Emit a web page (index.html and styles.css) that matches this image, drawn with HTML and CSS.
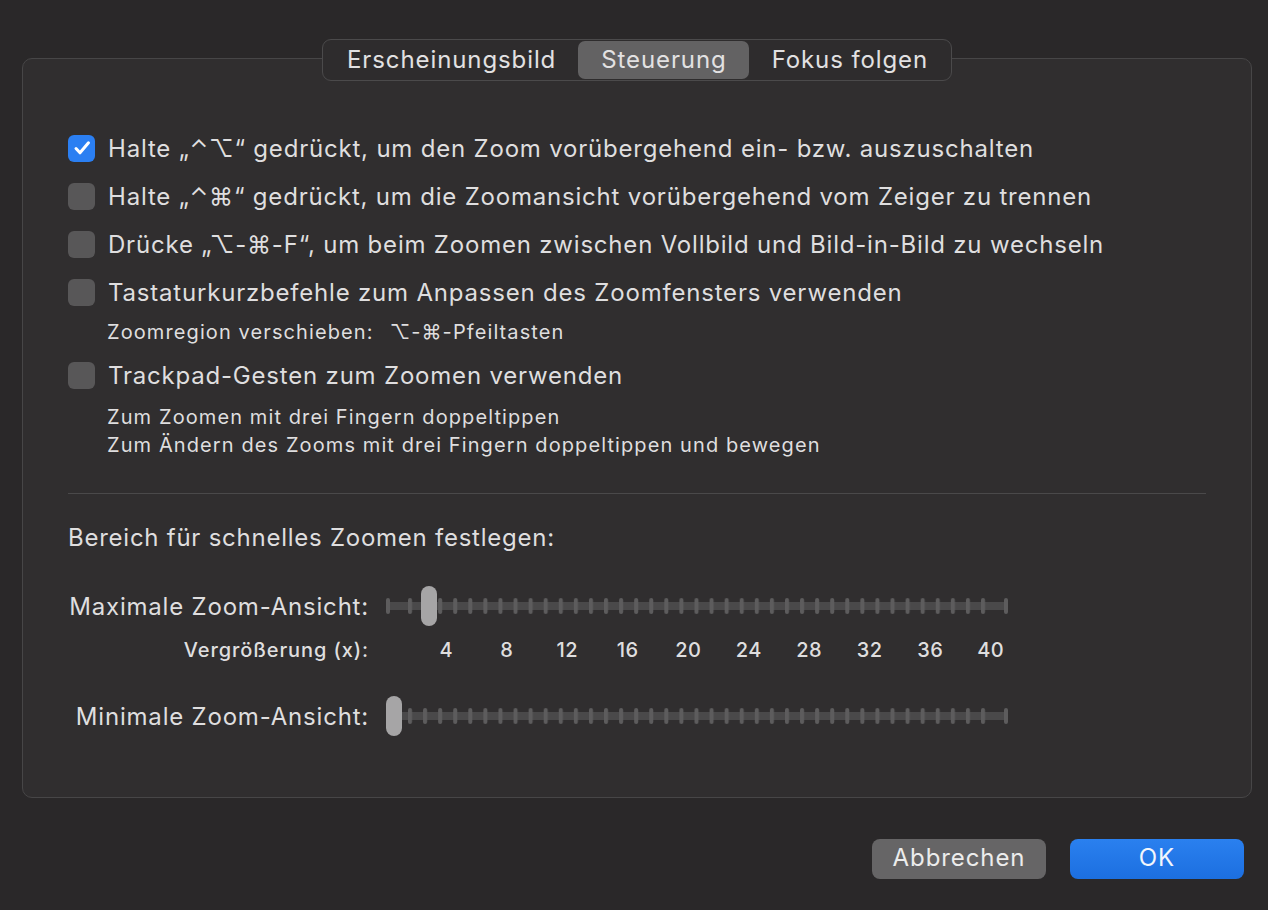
FILE: index.html
```html
<!DOCTYPE html>
<html lang="de">
<head>
<meta charset="utf-8">
<link rel="stylesheet" href="styles.css">
</head>
<body>
<div class="window">
  <div class="panel">
    <div class="tabs">
      <div class="tab">Erscheinungsbild</div>
      <div class="tab selected">Steuerung</div>
      <div class="tab">Fokus folgen</div>
    </div>

    <div class="options">
      <div class="row">
        <span class="check on"><svg width="26" height="26" viewBox="0 0 26 26"><path d="M7 13.5 L11 17.8 L19.5 7.8" fill="none" stroke="#fff" stroke-width="3" stroke-linecap="round" stroke-linejoin="round"/></svg></span>
        <span class="label">Halte „⌃⌥“ gedrückt, um den Zoom vorübergehend ein- bzw. auszuschalten</span>
      </div>
      <div class="row">
        <span class="check"></span>
        <span class="label">Halte „⌃⌘“ gedrückt, um die Zoomansicht vorübergehend vom Zeiger zu trennen</span>
      </div>
      <div class="row">
        <span class="check"></span>
        <span class="label">Drücke „⌥-⌘-F“, um beim Zoomen zwischen Vollbild und Bild-in-Bild zu wechseln</span>
      </div>
      <div class="row">
        <span class="check"></span>
        <span class="label">Tastaturkurzbefehle zum Anpassen des Zoomfensters verwenden</span>
      </div>
      <div class="sub first-sub">Zoomregion verschieben:<span class="keys">⌥-⌘-Pfeiltasten</span></div>
      <div class="row row-gap">
        <span class="check"></span>
        <span class="label">Trackpad-Gesten zum Zoomen verwenden</span>
      </div>
      <div class="sub after-gap">Zum Zoomen mit drei Fingern doppeltippen</div>
      <div class="sub">Zum Ändern des Zooms mit drei Fingern doppeltippen und bewegen</div>
    </div>

    <div class="divider"></div>

    <div class="heading">Bereich für schnelles Zoomen festlegen:</div>

    <div class="slider-row first">
      <div class="slabel">Maximale Zoom-Ansicht:</div>
      <svg class="slider" width="622" height="40" viewBox="0 0 622 40">
        <defs>
          <pattern id="ticks1" x="22" y="0" width="15.079" height="40" patternUnits="userSpaceOnUse">
            <rect x="0" y="12" width="4" height="16" rx="2" fill="#5d5c5d"/>
          </pattern>
        </defs>
        <rect x="0" y="16" width="622" height="8" fill="#4a494a"/>
        <rect x="22" y="0" width="578" height="40" fill="url(#ticks1)"/>
        <rect x="0" y="12" width="4" height="16" rx="2" fill="#5d5c5d"/>
        <rect x="618" y="12" width="4" height="16" rx="2" fill="#5d5c5d"/>
        <rect x="35" y="0" width="16" height="40" rx="8" fill="#a6a5a6"/>
      </svg>
    </div>
    <div class="scale-row">
      <div class="slabel small">Vergrößerung (x):</div>
      <div class="scale">
        <span>4</span><span>8</span><span>12</span><span>16</span><span>20</span><span>24</span><span>28</span><span>32</span><span>36</span><span>40</span>
      </div>
    </div>
    <div class="slider-row second">
      <div class="slabel">Minimale Zoom-Ansicht:</div>
      <svg class="slider" width="622" height="40" viewBox="0 0 622 40">
        <defs>
          <pattern id="ticks2" x="22" y="0" width="15.079" height="40" patternUnits="userSpaceOnUse">
            <rect x="0" y="12" width="4" height="16" rx="2" fill="#5d5c5d"/>
          </pattern>
        </defs>
        <rect x="0" y="16" width="622" height="8" fill="#4a494a"/>
        <rect x="22" y="0" width="578" height="40" fill="url(#ticks2)"/>
        <rect x="618" y="12" width="4" height="16" rx="2" fill="#5d5c5d"/>
        <rect x="0" y="0" width="16" height="40" rx="8" fill="#a6a5a6"/>
      </svg>
    </div>
  </div>

  <div class="buttons">
    <button class="btn cancel">Abbrechen</button>
    <button class="btn ok">OK</button>
  </div>
</div>
</body>
</html>
```

FILE: styles.css
```css
html, body {
  margin: 0;
  padding: 0;
  background: #2a2829;
}
body {
  width: 1268px;
  height: 910px;
  overflow: hidden;
  font-family: Inter, "Noto Sans", "DejaVu Sans", sans-serif;
  color: #dfdedf;
}
.window {
  padding: 58px 16px 0 22px;
}
.panel {
  box-sizing: border-box;
  width: 1230px;
  height: 740px;
  background: #302e2f;
  border: 1px solid #474647;
  border-radius: 10px;
  padding: 0 0 0 45px;
}
.tabs {
  display: flex;
  width: max-content;
  margin: -20px auto 0 254px;
  height: 42px;
  box-sizing: border-box;
  border: 1px solid #4b4a4b;
  border-radius: 9px;
  background: #2e2c2d;
  padding: 1px;
  align-items: stretch;
}
.tab {
  font-size: 24px;
  letter-spacing: 0.9px;
  line-height: 38px;
  padding: 0 22px 0 23px;
  border-radius: 7px;
  color: #e2e1e2;
}
.tab.selected {
  background: #636263;
}
.options {
  margin-top: 43px;
}
.row {
  display: flex;
  align-items: center;
  height: 48px;
}
.row-gap {
  margin-top: 5px;
}
.check {
  width: 27px;
  height: 27px;
  border-radius: 6px;
  background: #585758;
  flex: none;
  margin-right: 13px;
  display: flex;
  align-items: center;
  justify-content: center;
}
.check.on {
  background: #2b7ff2;
}
.label {
  font-size: 24px;
  letter-spacing: 0.8px;
  white-space: nowrap;
}
.sub {
  font-size: 20px;
  letter-spacing: 1.1px;
  line-height: 28px;
  padding-left: 39px;
  white-space: nowrap;
}
.first-sub {
  margin-top: 2px;
}
.after-gap {
  margin-top: 4px;
}
.keys {
  margin-left: 16px;
}
.divider {
  height: 1px;
  background: #4a494a;
  width: 1138px;
  margin-top: 34px;
}
.heading {
  margin-top: 29px;
  font-size: 24px;
  letter-spacing: 0.75px;
  line-height: 30px;
}
.slider-row, .scale-row {
  display: flex;
  align-items: center;
}
.slider-row {
  height: 40px;
}
.slider-row.first {
  margin-top: 33px;
}
.slider-row.second {
  margin-top: 32px;
}
.slabel {
  width: 301px;
  text-align: right;
  font-size: 24px;
  letter-spacing: 0.8px;
  margin-right: 17px;
  white-space: nowrap;
}
.slabel.small {
  font-size: 20px;
  font-weight: 500;
  letter-spacing: 0.9px;
}
.slider {
  display: block;
}
.scale-row {
  height: 28px;
  margin-top: 10px;
}
.scale {
  display: flex;
  margin-left: 30px;
}
.scale span {
  width: 60.5px;
  text-align: center;
  font-size: 20px;
  font-weight: 500;
  letter-spacing: 0.5px;
}
.buttons {
  display: flex;
  justify-content: flex-end;
  gap: 24px;
  margin-top: 41px;
  padding-right: 8px;
}
.btn {
  width: 174px;
  height: 40px;
  border: none;
  border-radius: 8px;
  font-family: Inter, "Noto Sans", sans-serif;
  font-size: 24px;
  letter-spacing: 0.9px;
  color: #ececec;
  padding: 0 0 3px;
}
.btn.cancel {
  background: #666566;
}
.btn.ok {
  background: linear-gradient(#2a80ef, #1c6fe0);
  color: #f2f6fc;
}
```
